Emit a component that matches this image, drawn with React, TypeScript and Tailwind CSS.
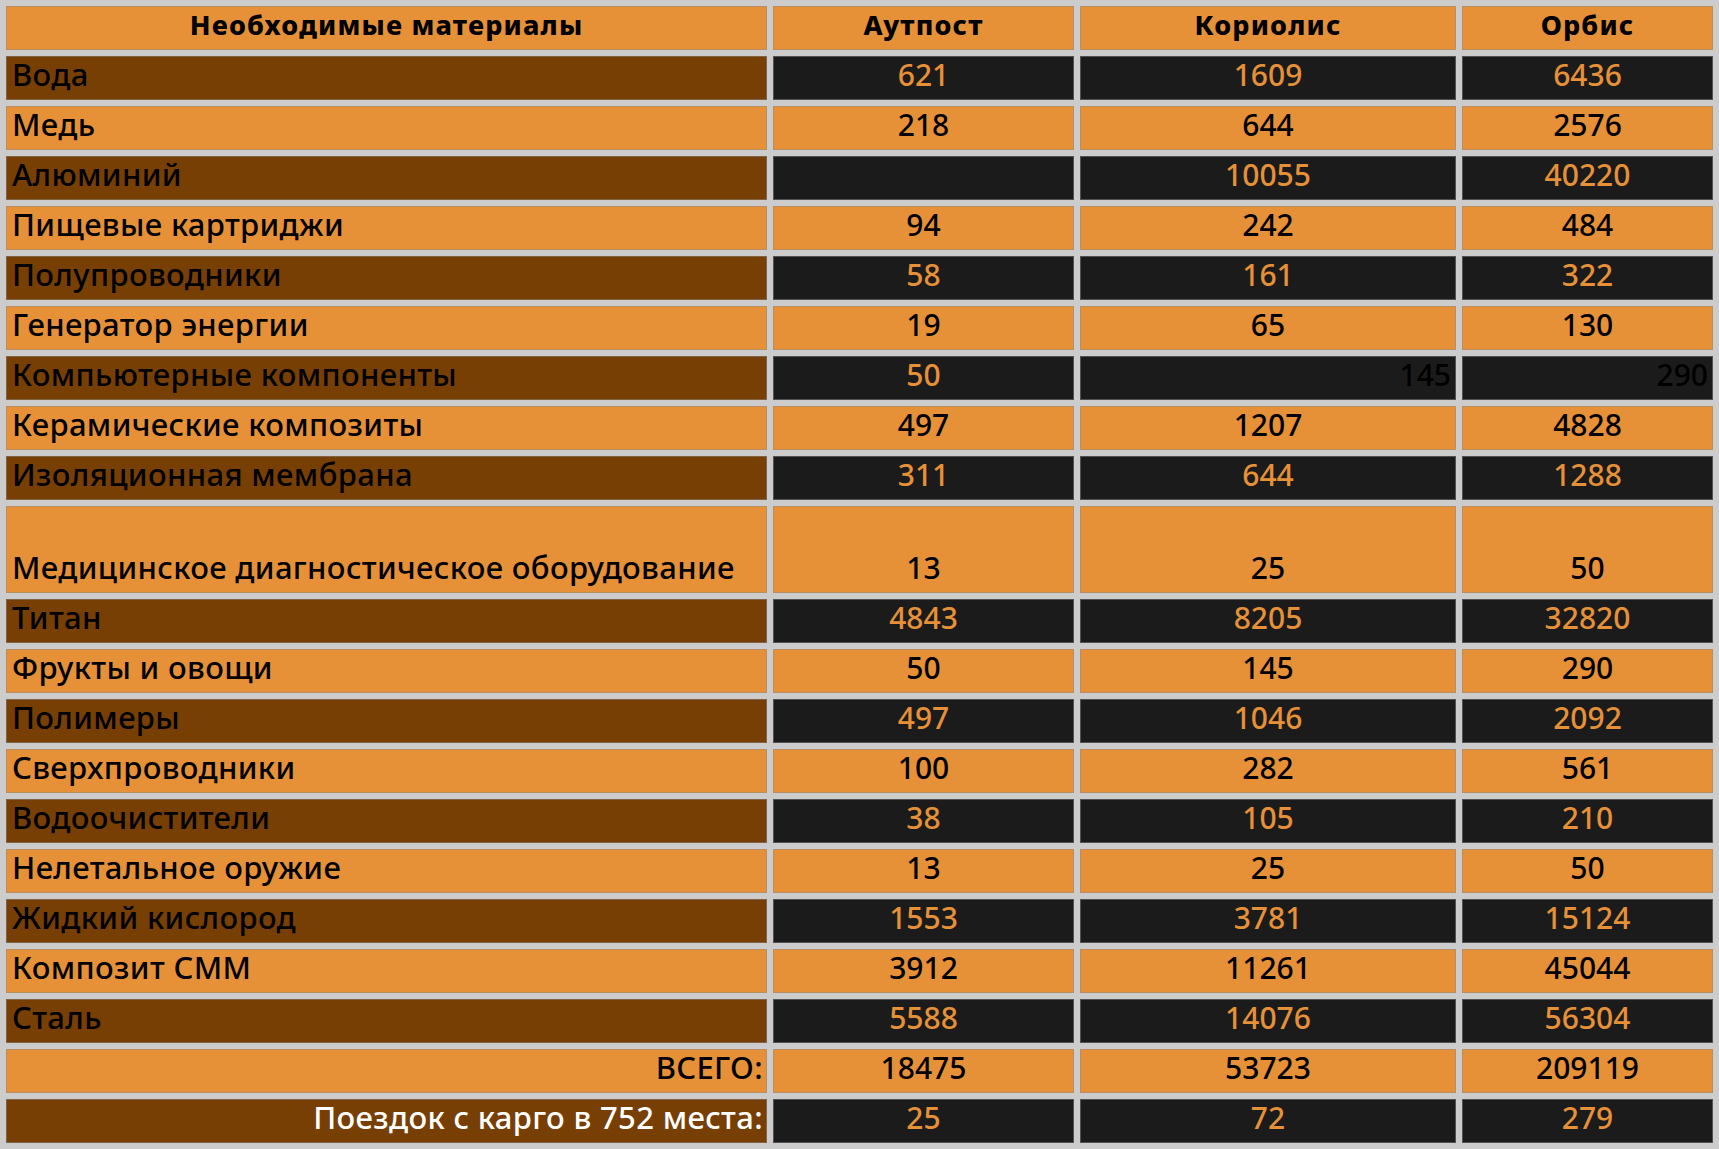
type Row = {
  name: string;
  values: (number | null)[];
  tall?: boolean;
  odd?: boolean; // row where two values are right-aligned and black
  right?: boolean;
};

const rows: Row[] = [
  { name: 'Вода', values: [621, 1609, 6436] },
  { name: 'Медь', values: [218, 644, 2576] },
  { name: 'Алюминий', values: [null, 10055, 40220] },
  { name: 'Пищевые картриджи', values: [94, 242, 484] },
  { name: 'Полупроводники', values: [58, 161, 322] },
  { name: 'Генератор энергии', values: [19, 65, 130] },
  { name: 'Компьютерные компоненты', values: [50, 145, 290], odd: true },
  { name: 'Керамические композиты', values: [497, 1207, 4828] },
  { name: 'Изоляционная мембрана', values: [311, 644, 1288] },
  { name: 'Медицинское диагностическое оборудование', values: [13, 25, 50], tall: true },
  { name: 'Титан', values: [4843, 8205, 32820] },
  { name: 'Фрукты и овощи', values: [50, 145, 290] },
  { name: 'Полимеры', values: [497, 1046, 2092] },
  { name: 'Сверхпроводники', values: [100, 282, 561] },
  { name: 'Водоочистители', values: [38, 105, 210] },
  { name: 'Нелетальное оружие', values: [13, 25, 50] },
  { name: 'Жидкий кислород', values: [1553, 3781, 15124] },
  { name: 'Композит СММ', values: [3912, 11261, 45044] },
  { name: 'Сталь', values: [5588, 14076, 56304] },
  { name: 'ВСЕГО:', values: [18475, 53723, 209119], right: true },
  { name: 'Поездок с карго в 752 места:', values: [25, 72, 279], right: true },
];

const cell = 'flex items-end border border-[#8a8a8a]/50 pb-[5px] leading-[1.3] whitespace-nowrap';
const head = `${cell} h-[44px] justify-center bg-[#e69138] text-[27px] font-extrabold tracking-[1.2px] pb-[7px]`;

export default function App() {
  return (
    <div
      className="min-h-screen bg-[#cccccc] text-[30px] font-medium text-black"
      style={{ fontFamily: '"Noto Sans", "Open Sans", sans-serif' }}
    >
      <div className="grid grid-cols-[761px_301px_376px_251px] gap-[6px] p-[6px]">
        <div className={head}>Необходимые материалы</div>
        <div className={head}>Аутпост</div>
        <div className={head}>Кориолис</div>
        <div className={head}>Орбис</div>

        {rows.map((r, i) => {
          const dark = i % 2 === 0;
          const h = r.tall ? 'h-[87px]' : 'h-[44px]';
          return (
            <div key={r.name} className="contents">
              <div
                className={`${cell} ${h} text-[31px] tracking-[0.35px] ${r.right ? 'justify-end pr-[3px]' : 'pl-[5px]'} ${
                  dark ? 'bg-[#783f04]' : 'bg-[#e69138]'
                } ${dark && r.right ? 'text-white' : 'text-black'}`}
              >
                {r.name}
              </div>
              {r.values.map((v, j) => {
                const rightBlack = r.odd && j > 0;
                return (
                  <div
                    key={j}
                    className={`${cell} ${h} ${rightBlack ? 'justify-end pr-[4px] text-black' : 'justify-center'} ${
                      dark ? 'bg-[#1b1b1b]' : 'bg-[#e69138]'
                    } ${dark && !rightBlack ? 'text-[#e69138]' : ''} ${!dark ? 'text-black' : ''}`}
                  >
                    {v ?? ''}
                  </div>
                );
              })}
            </div>
          );
        })}
      </div>
    </div>
  );
}
